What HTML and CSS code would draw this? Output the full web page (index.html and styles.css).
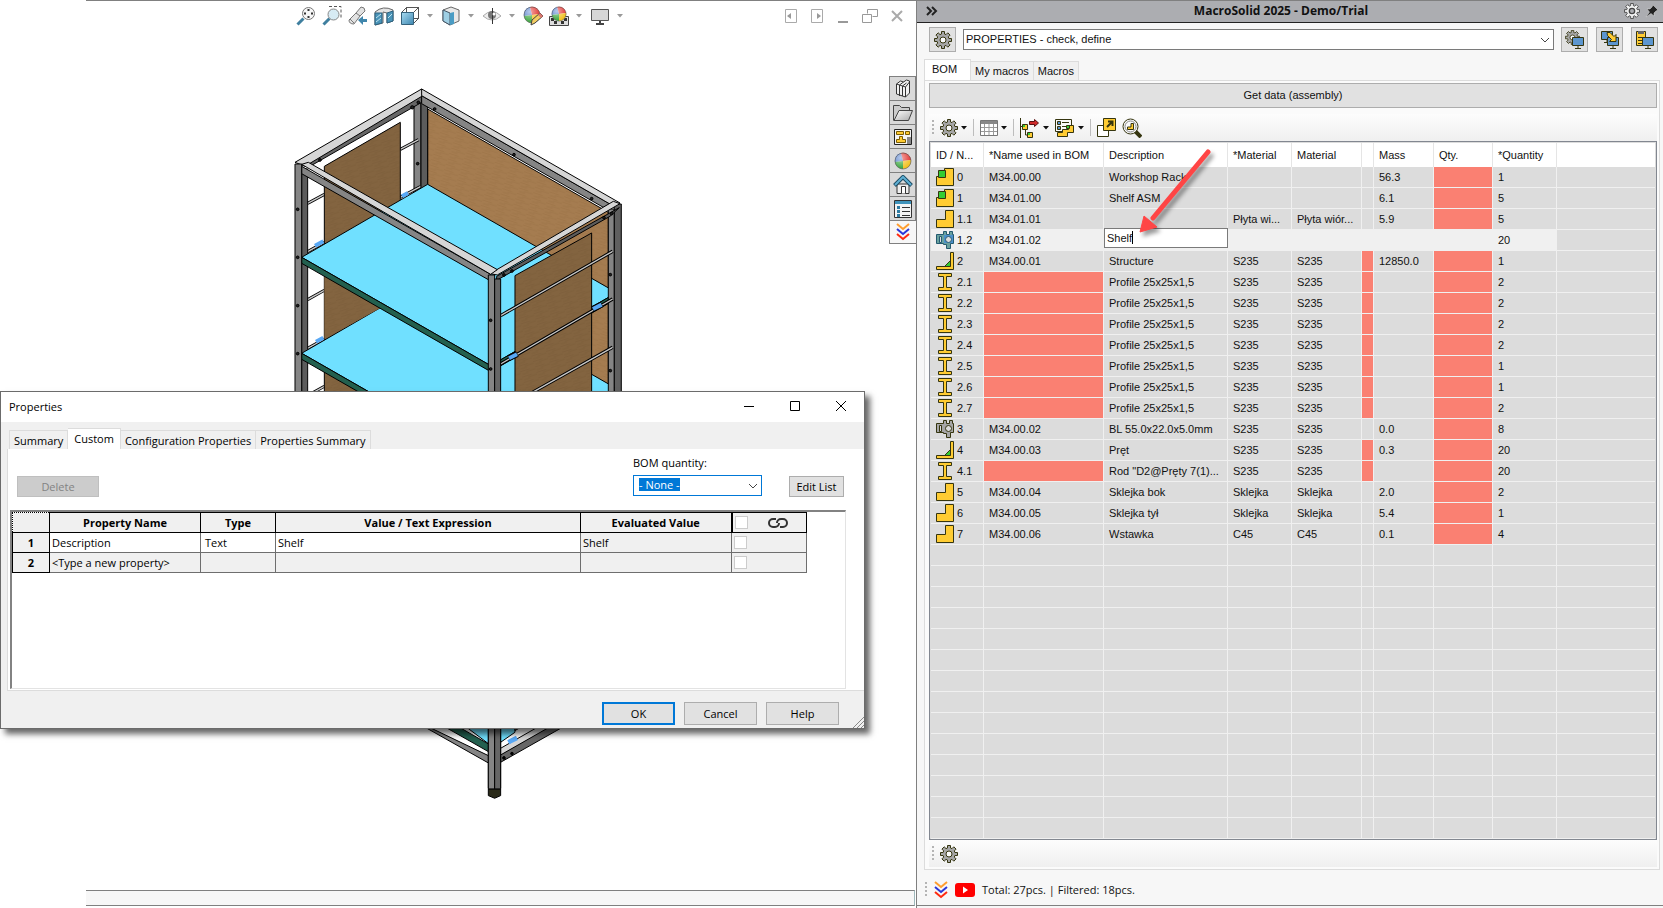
FILE: index.html
```html
<!DOCTYPE html>
<html lang="en">
<head>
    <meta charset="UTF-8">
    <meta name="viewport" content="width=device-width, initial-scale=1.0">
    <title>MacroSolid 2025 - Demo/Trial</title>
    <link rel="stylesheet" href="styles.css">
</head>
<body>

<!-- shared icons -->
<svg class="defs" width="0" height="0" aria-hidden="true">
    <defs>
        <radialGradient id="shine" cx="35%" cy="30%" r="70%">
            <stop offset="0" stop-color="#fff" stop-opacity=".6"/>
            <stop offset="1" stop-color="#fff" stop-opacity="0"/>
        </radialGradient>
        <linearGradient id="blueFace" x1="0" y1="0" x2="1" y2="1">
            <stop offset="0" stop-color="#a9dcf2"/>
            <stop offset="1" stop-color="#3d86b0"/>
        </linearGradient>
        <linearGradient id="paper" x1="0" y1="0" x2="1" y2="1">
            <stop offset="0" stop-color="#fff"/>
            <stop offset="1" stop-color="#aaa"/>
        </linearGradient>
        <pattern id="grain" width="46" height="17" patternUnits="userSpaceOnUse" patternTransform="rotate(18)">
            <rect width="46" height="17" fill="#a57c50"/>
            <path d="M0 4H30M18 9H46M4 14H24" stroke="#9a7145" stroke-width="1.5"/>
        </pattern>
        <pattern id="grainDark" width="46" height="17" patternUnits="userSpaceOnUse" patternTransform="rotate(-18)">
            <rect width="46" height="17" fill="#836440"/>
            <path d="M0 4H30M18 9H46M4 14H24" stroke="#795a37" stroke-width="1.5"/>
        </pattern>
    </defs>
    <symbol id="gear" viewBox="0 0 18 18">
        <path d="M7.500.5h3v2.500l1.500.6 1.800-1.800 2.300 2.300-1.800 1.800.6 1.600h2.600v3h-2.600l-.6 1.600 1.800 1.800-2.300 2.300-1.800-1.800-1.500.6v2.500h-3v-2.500l-1.500-.6-1.800 1.800-2.300-2.300 1.800-1.800-.6-1.600H.5v-3h2.600l.6-1.600-1.800-1.800 2.300-2.300 1.800 1.800 1.500-.6z" fill="#a6a6a6" stroke="#35350f"/>
        <circle cx="9" cy="9" r="3" fill="#fafafa" stroke="#35350f"/>
    </symbol>
    <symbol id="asm" viewBox="0 0 18 18">
        <path d="M8.500 .5h9v17h-17v-9h8z" fill="#fc3" stroke="#35350f"/>
        <path d="M2.500 2.500h7v7h-7z" fill="#3c3" stroke="#35350f"/>
    </symbol>
    <symbol id="part" viewBox="0 0 18 18">
        <path d="M9.500 .5h8v17h-17v-8h9z" fill="#fc3" stroke="#35350f"/>
    </symbol>
    <symbol id="beam" viewBox="0 0 18 18">
        <path d="M2.500 .5h13v3h-5v11h5v3h-13v-3h5v-11h-5z" fill="#fc3" stroke="#35350f"/>
    </symbol>
    <symbol id="weld" viewBox="0 0 18 18">
        <path d="M8.500 14.500l6-6v6z" fill="#3c3" stroke="#35350f"/>
        <path d="M14.500 .5h3v17h-17v-3h14z" fill="#fc3" stroke="#35350f"/>
    </symbol>
    <symbol id="bolt" viewBox="0 0 18 18">
        <path d="M.5 3.500h7v-3h3v3h3v-3h3v3h1v9h-3v5h-4v-4h-3v-1h-7z" fill="#a6a6a6" stroke="#35350f"/>
        <path d="M3.500 5.500h2v6h-2z" fill="#ddd" stroke="#35350f"/>
        <circle cx="12.500" cy="8.500" r="3" fill="#ddd" stroke="#35350f"/>
    </symbol>
    <symbol id="boltSel" viewBox="0 0 18 18">
        <path d="M.5 3.500h7v-3h3v3h3v-3h3v3h1v9h-3v5h-4v-4h-3v-1h-7z" fill="#69a29f" stroke="#245a70"/>
        <path d="M8 4h9v8H8z" fill="#4b90cc"/>
        <path d="M3.500 5.500h2v6h-2z" fill="#ddd" stroke="#245a70"/>
        <circle cx="12.500" cy="8.500" r="3" fill="#ddd" stroke="#245a70"/>
    </symbol>
    <symbol id="monitor" viewBox="0 0 12 12">
        <path d="M.5 .5h11v8H.5z" fill="#5c96cf" stroke="#35350f"/>
        <path d="M6 9v2.500M3 11.500h6" stroke="#35350f" fill="none"/>
    </symbol>
    <symbol id="chevrons" viewBox="0 0 14 18">
        <path d="M1 1l6 5 6-5" fill="none" stroke="#ff9d2e" stroke-width="2"/>
        <path d="M1 6l6 5 6-5" fill="none" stroke="#2a35d8" stroke-width="2"/>
        <path d="M1 11l6 5 6-5" fill="none" stroke="#ff2a10" stroke-width="2"/>
    </symbol>
    <symbol id="ball" viewBox="0 0 18 18">
        <path d="M9 9L7 1a8 8 0 0 0-6 9z" fill="#4b78c8"/>
        <path d="M9 9L7 1a8 8 0 0 1 10 7z" fill="#e0302c"/>
        <path d="M9 9L1 10a8 8 0 0 0 8 7z" fill="#37a43a"/>
        <path d="M9 9v8a8 8 0 0 0 8-9z" fill="#f2c01e"/>
        <circle cx="9" cy="9" r="8" fill="url(#shine)" stroke="#555" stroke-width=".6"/>
    </symbol>
    <symbol id="drop" viewBox="0 0 6 4">
        <path d="M0 0h6L3 3.500z" fill="currentColor"/>
    </symbol>
</svg>

<div class="app">
    <main class="workspace">
        <div class="view-bar">
            <div class="view-tools">
                <button aria-label="Zoom to fit"><svg width="20" height="20"><path d="M1.500 18.500l6-6" stroke="#3f7f9f" stroke-width="3"/><circle cx="12.500" cy="7.500" r="6" fill="#f6f6f6" stroke="#777"/><path d="M12.500 3v2M12.500 10v2M8 7.500h2M15 7.500h2" stroke="#333" stroke-width="2"/></svg></button>
                <button aria-label="Zoom to area"><svg width="20" height="20"><path d="M7 .5h12v11" fill="none" stroke="#555" stroke-dasharray="3 2"/><path d="M1.500 18.500l6-6" stroke="#3f7f9f" stroke-width="3"/><circle cx="11.500" cy="8.500" r="5.500" fill="#d7ebf4" stroke="#888"/></svg></button>
                <button aria-label="Previous view"><svg width="20" height="20"><path d="M1 14L8 7l5-6q4 0 4 4l-5 5-6 8q-5 0-5-4z" fill="#e2e2e2" stroke="#777"/><path d="M8 7l4 3M2 13l4 4" stroke="#777"/><path d="M10 14l5-4v3h4v3h-4v3z" fill="#3f86ac"/></svg></button>
                <button aria-label="Section view"><svg width="20" height="20"><path d="M1 6q8-7 18-2v11l-6 2V7l-4-1v11l-8 2z" fill="#e4e4e4" stroke="#666"/><path d="M1 7h7v10l-7 2zM13 7l6-2v10l-6 2z" fill="#4a94b8" stroke="#2c6280"/><path d="M2 12l5-4M2 16l5-4M14 12l4-4" stroke="#bfe3f0"/></svg></button>
                <button aria-label="View orientation"><svg width="20" height="20"><path d="M6.500 1.500h12v11h-12zM1 7l6-6M13 7l6-6M13 18l6-6" fill="none" stroke="#555"/><path d="M1.500 6.500h12v12h-12z" fill="url(#blueFace)" stroke="#35627c"/></svg></button>
                <svg class="drop" width="6" height="4"><use href="#drop"/></svg>
                <button aria-label="Display style"><svg width="20" height="20"><path d="M2 4l8-3 8 3v11l-9 4-7-4z" fill="#e8e8e8" stroke="#666"/><path d="M2 4l7 3v12l-7-4z" fill="#9fcfe4" stroke="#456"/><path d="M9 7l4-1v12l-4 1z" fill="#4a9cc4"/></svg></button>
                <svg class="drop" width="6" height="4"><use href="#drop"/></svg>
                <button aria-label="Hide/show items"><svg width="20" height="20"><path d="M1 10q9-9 18 0q-9 8-18 0z" fill="#eee" stroke="#aaa"/><circle cx="10" cy="9" r="4" fill="#777"/><path d="M10.500 2v16" stroke="#333"/><circle cx="12" cy="8" r="1.500" fill="#fff"/></svg></button>
                <svg class="drop" width="6" height="4"><use href="#drop"/></svg>
                <button aria-label="Edit appearance"><svg width="20" height="20"><use href="#ball" width="18" height="18"/><path d="M8 19l1-5 8-7 3 3-8 7z" fill="#f3cc62" stroke="#444"/><path d="M15 9l2-2 3 3-2 2z" fill="#db7770"/></svg></button>
                <button aria-label="Apply scene"><svg width="20" height="20"><path d="M.5 10.500h19v9H.5z" fill="#ddd" stroke="#444"/><path d="M2 12h3v3H2zM15 12h3v3h-3zM5 15h3v3H5zM12 15h3v3h-3z" fill="#333"/><use href="#ball" x="2" width="16" height="16"/></svg></button>
                <svg class="drop" width="6" height="4"><use href="#drop"/></svg>
                <button aria-label="View settings"><svg width="20" height="20"><path d="M1.500 3.500h17v11h-17z" fill="#d6d6d6" stroke="#555"/><path d="M10 15v3M6 18h8" stroke="#444" stroke-width="2"/></svg></button>
                <svg class="drop" width="6" height="4"><use href="#drop"/></svg>
            </div>
            <div class="doc-tools">
                <button aria-label="Collapse left"><svg width="14" height="14"><path d="M1.500 .5h11v13h-11z" fill="none" stroke="#aaa"/><path d="M7 4v6L3 7z" fill="#999"/></svg></button>
                <button aria-label="Collapse right"><svg width="14" height="14"><path d="M1.500 .5h11v13h-11z" fill="none" stroke="#aaa"/><path d="M7 4v6l4-3z" fill="#999"/></svg></button>
                <button aria-label="Minimize"><svg width="14" height="14"><path d="M2 13h10" stroke="#999" stroke-width="2"/></svg></button>
                <button aria-label="Restore"><svg width="16" height="14"><path d="M5.500 4.500v-4h10v7h-5M.5 5.500h9v8h-9z" fill="none" stroke="#999"/></svg></button>
                <button aria-label="Close document"><svg width="14" height="14"><path d="M2 2l10 10M12 2L2 12" stroke="#aaa" stroke-width="2"/></svg></button>
            </div>
        </div>

        <div class="scene-row">
            <svg class="scene" role="img" aria-label="Workshop rack model">
                <g transform="translate(280 39) scale(.3333)" stroke="#000" stroke-width="3" stroke-linejoin="round">
                    <!-- back panel and rear post -->
                    <path d="M443 90L985 400V1500H443z" fill="url(#grain)"/>
                    <path d="M402 60h21v290h-21z" fill="#858585"/>
                    <path d="M423 60h20v290h-20z" fill="#5c5c5c"/>
                    <!-- left side rods and panel -->
                    <g stroke-width="9"><path d="M361 211l55-29M83 373l50-27M83 518l50-28M361 355l60-32M83 662l50-28M83 808l50-28M83 950l50-28"/></g>
                    <g stroke-width="4" stroke="#ccc"><path d="M361 211l55-29M83 373l50-27M83 518l50-28M361 355l60-32M83 662l50-28M83 808l50-28M83 950l50-28"/></g>
                    <path d="M133 262L361 130V980H133z" fill="url(#grainDark)"/>
                    <path d="M65 270h18v700h-18z" fill="#5c5c5c"/>
                    <!-- lower shelf -->
                    <path d="M65 823L443 604L1010 929L632 1148z" fill="#70e0ff"/>
                    <path d="M65 823L632 1148V1166L65 841z" fill="#23604f"/>
                    <path d="M133 590L300 688L133 780z" fill="url(#grainDark)" stroke="none"/>
                    <!-- upper shelf -->
                    <path d="M65 535L443 316L1010 641L632 860z" fill="#70e0ff"/>
                    <path d="M65 535L632 860V878L65 553z" fill="#23604f"/>
                    <path d="M632 860L1010 641V659L632 878z" fill="#23604f"/>
                    <path d="M632 882L705 840V950H632z" fill="#70e0ff" stroke="none"/>
                    <path d="M105 500l25-13M366 352l18-10M108 788l22-12" stroke="#58a8f5" stroke-width="12"/>
                    <!-- right rear post -->
                    <path d="M985 390h18v560h-18z" fill="#858585"/>
                    <path d="M1003 375h21v575h-21z" fill="#606060"/>
                    <!-- top frame, back side -->
                    <path d="M90 240L425 50V70L90 262z" fill="#666"/>
                    <path d="M45 250L425 30L432 48L75 262z" fill="#d6d6d6"/>
                    <path d="M425 50L990 375L970 385L425 74z" fill="#858585"/>
                    <path d="M425 30L1020 372L995 378L425 50z" fill="#d6d6d6"/>
                    <!-- right side panel and rods -->
                    <path d="M705 590L935 462V950H705z" fill="url(#grainDark)"/>
                    <path d="M662 710L998 517M662 855L998 660M740 950L998 805" stroke-width="10"/>
                    <path d="M662 710L998 517M662 855L998 660M740 950L998 805" stroke="#c8c8c8" stroke-width="4"/>
                    <path d="M686 838l26-13M938 690l28-14" stroke="#000" stroke-width="18"/>
                    <path d="M687 838l24-12M939 690l26-13" stroke="#58a8f5" stroke-width="12"/>
                    <!-- top frame, front side -->
                    <path d="M650 592L1018 386L990 412L650 604z" fill="#5c5c5c"/>
                    <path d="M630 584L1000 367L1020 374L652 588z" fill="#d6d6d6"/>
                    <path d="M65 262L632 586V606L65 284z" fill="#858585"/>
                    <path d="M65 256L85 250L652 572L632 586z" fill="#d6d6d6"/>
                    <!-- left and front posts -->
                    <path d="M45 255h20v695h-20z" fill="#858585"/>
                    <path d="M625 588h19v1540h-19z" fill="#858585"/>
                    <path d="M644 600h18v1528h-18z" fill="#666"/>
                    <g fill="#222">
                        <circle cx="53" cy="391" r="4"/><circle cx="53" cy="535" r="4"/><circle cx="53" cy="680" r="4"/><circle cx="53" cy="824" r="4"/>
                        <circle cx="632" cy="724" r="4"/><circle cx="632" cy="870" r="4"/>
                        <circle cx="413" cy="254" r="4"/><circle cx="991" cy="587" r="4"/><circle cx="991" cy="875" r="4"/>
                        <circle cx="464" cy="90" r="4"/><circle cx="702" cy="227" r="4"/><circle cx="935" cy="359" r="4"/>
                        <circle cx="120" cy="243" r="4"/><circle cx="397" cy="85" r="5"/><circle cx="415" cy="70" r="4"/>
                        <circle cx="672" cy="588" r="4"/><circle cx="696" cy="576" r="4"/><circle cx="972" cy="416" r="4"/><circle cx="995" cy="404" r="4"/>
                    </g>
                    <!-- bottom corner -->
                    <path d="M460 1900L625 1995V2018L400 1890z" fill="#23604f"/>
                    <path d="M500 1900H625V1994z" fill="#70e0ff"/>
                    <path d="M400 1922L625 2030V2052L400 1925z" fill="#858585"/>
                    <path d="M662 1900H705V1960L662 1990z" fill="#70e0ff"/>
                    <path d="M705 1900H800L705 1955z" fill="#83643f"/>
                    <path d="M662 2008L830 1912V1935L662 2030z" fill="#d6d6d6"/>
                    <path d="M662 2028L860 1915V1938L662 2050z" fill="#666"/>
                    <path d="M685 1990l26-13" stroke="#58a8f5" stroke-width="14"/>
                    <circle cx="672" cy="2037" r="4"/><circle cx="696" cy="2024" r="4"/>
                    <path d="M625 2130h37v20l-18 8-19-8z" fill="#2b2b1a"/>
                    <path d="M625 1850h19v280h-19z" fill="#858585"/>
                    <path d="M644 1850h18v280h-18z" fill="#666"/>
                </g>
            </svg>

            <nav class="side-tabs">
                <button aria-label="Design library"><svg width="20" height="20"><path d="M3.500 5l4-3 3 1 3-2 3 1v12l-4 4-9-3z" fill="#f2f2f2" stroke="#333"/><path d="M3.500 5l3 1v11M6.500 6l4-3M9.500 17V7l4-3M9.500 7l-3-1M12.500 18V8l4-5M12.500 8l-3-1" fill="none" stroke="#333"/></svg></button>
                <button aria-label="File explorer"><svg width="20" height="20"><path d="M.5 17.500v-15h6l2 2h8v3" fill="#ccc" stroke="#444"/><path d="M1 17.500L6 7.500h13.500l-4 10z" fill="url(#paper)" stroke="#444"/></svg></button>
                <button aria-label="View palette"><svg width="20" height="20"><path d="M1.500 2.500h17v15h-17z" fill="#f4f4f4" stroke="#222"/><path d="M3.500 4.500h7v3h-7zM12.500 4.500h4v3h-4zM6.500 9.500h3v3h3v3h-9v-3h3z" fill="#fc3" stroke="#7a5b00"/><path d="M14 10h4v7h-4z" fill="#888"/></svg></button>
                <button aria-label="Appearances"><svg width="20" height="20"><use href="#ball" x="1" y="1" width="18" height="18"/></svg></button>
                <button aria-label="Home"><svg width="20" height="20"><path d="M4 9h12v9.500H4z" fill="#eee" stroke="#333"/><path d="M8.500 18.500v-7h4v7" fill="#fff" stroke="#333"/><path d="M1.500 10.500L10 2l8.500 8.500" fill="none" stroke="#1c4b63" stroke-width="4"/><path d="M2 10l8-8 8 8" fill="none" stroke="#5fb0d4" stroke-width="2"/></svg></button>
                <button aria-label="Custom properties"><svg width="20" height="20"><path d="M1.500 1.500h17v17h-17z" fill="#f4f4f4" stroke="#333"/><path d="M2 2h16v3H2z" fill="#3f93bb"/><path d="M4 7h3v3H4zM4 11h3v3H4zM4 15h3v3H4z" fill="#2d7ba3"/><path d="M9 8.500h8M9 12.500h8M9 16.500h8" stroke="#333"/></svg></button>
                <button class="active" aria-label="MacroSolid"><svg width="14" height="18"><use href="#chevrons"/></svg></button>
            </nav>
        </div>

        <div class="status-bar"></div>

        <section class="dialog">
            <header class="dialog-title">
                <h2>Properties</h2>
                <div class="window-buttons">
                    <button aria-label="Minimize"><svg width="12" height="12"><path d="M1 6.500h10" stroke="#000"/></svg></button>
                    <button aria-label="Maximize"><svg width="12" height="12"><path d="M1.500 1.500h9v9h-9z" fill="none" stroke="#000"/></svg></button>
                    <button aria-label="Close"><svg width="12" height="12"><path d="M1 1l10 10M11 1L1 11" stroke="#000"/></svg></button>
                </div>
            </header>
            <div class="dialog-tabs">
                <button>Summary</button>
                <button class="active">Custom</button>
                <button>Configuration Properties</button>
                <button>Properties Summary</button>
            </div>
            <div class="dialog-pane">
                <div class="dialog-tools">
                    <button class="btn delete" disabled>Delete</button>
                    <div class="bom-quantity">
                        <label for="bomQuantity">BOM quantity:</label>
                        <div class="combo">
                            <span class="combo-value">- None -</span>
                            <select id="bomQuantity"><option>- None -</option></select>
                            <svg width="10" height="6"><path d="M1 1l4 4 4-4" fill="none" stroke="#444"/></svg>
                        </div>
                    </div>
                    <button class="btn edit-list">Edit List</button>
                </div>
                <div class="prop-box">
                    <table class="props">
                        <colgroup><col class="p-no"><col class="p-name"><col class="p-type"><col class="p-value"><col class="p-eval"><col class="p-link"></colgroup>
                        <thead>
                            <tr>
                                <th class="corner"></th><th>Property Name</th><th>Type</th><th>Value / Text Expression</th><th>Evaluated Value</th>
                                <th class="link-head">
                                    <div class="link-cell">
                                        <input type="checkbox" aria-label="Link all">
                                        <svg width="20" height="12"><path d="M8 2H5a4 4 0 0 0 0 8h2a4 4 0 0 0 4-4M12 10h3a4 4 0 0 0 0-8h-2a4 4 0 0 0-4 4" fill="none" stroke="#333" stroke-width="2"/></svg>
                                    </div>
                                </th>
                            </tr>
                        </thead>
                        <tbody>
                            <tr><th>1</th><td class="white">Description</td><td class="white">Text</td><td class="white">Shelf</td><td>Shelf</td><td><div class="link-cell"><input type="checkbox" aria-label="Link property 1"></div></td></tr>
                            <tr><th>2</th><td>&lt;Type a new property&gt;</td><td></td><td></td><td></td><td><div class="link-cell"><input type="checkbox" aria-label="Link property 2"></div></td></tr>
                        </tbody>
                    </table>
                </div>
            </div>
            <footer class="dialog-actions">
                <button class="btn ok">OK</button>
                <button class="btn">Cancel</button>
                <button class="btn">Help</button>
            </footer>
            <svg class="grip" width="12" height="12"><path d="M1 12L12 1M5 12l7-7M9 12l3-3" stroke="#888"/></svg>
        </section>
    </main>

    <aside class="panel">
        <header class="panel-title">
            <button aria-label="Collapse panel"><svg width="12" height="10"><path d="M1 1l4 4-4 4M6 1l4 4-4 4" fill="none" stroke="#222" stroke-width="2"/></svg></button>
            <h1>MacroSolid 2025 - Demo/Trial</h1>
            <div class="title-tools">
                <button aria-label="Settings"><svg width="16" height="16" viewBox="0 0 18 18"><path d="M7.500.5h3v2.500l1.500.6 1.800-1.800 2.300 2.300-1.800 1.800.6 1.600h2.600v3h-2.600l-.6 1.600 1.800 1.800-2.300 2.300-1.800-1.800-1.500.6v2.500h-3v-2.500l-1.500-.6-1.800 1.800-2.300-2.300 1.800-1.800-.6-1.600H.5v-3h2.600l.6-1.600-1.800-1.800 2.300-2.300 1.800 1.800 1.500-.6z" fill="#f2f2f2" stroke="#444"/><circle cx="9" cy="9" r="3" fill="#acadb1" stroke="#444" stroke-width="1.500"/></svg></button>
                <button aria-label="Pin"><svg width="14" height="14"><path d="M8 1l5 5-2 1-2 2v3l-3-2.500L1 13l3.500-5L2 5h3l2-2z" fill="#222" stroke="#ddd" stroke-width=".5"/></svg></button>
            </div>
        </header>

        <div class="macro-bar">
            <button class="tool" aria-label="Macro settings"><svg width="18" height="18"><use href="#gear"/></svg></button>
            <div class="macro-select">
                <select aria-label="Macro"><option>PROPERTIES - check, define</option></select>
                <svg width="10" height="6"><path d="M1 1l4 4 4-4" fill="none" stroke="#444"/></svg>
            </div>
            <div class="macro-buttons">
                <button class="tool" aria-label="Run on screen"><svg width="20" height="20"><use href="#gear" width="15" height="15"/><use href="#monitor" x="7" y="7" width="12" height="12"/></svg></button>
                <button class="tool" aria-label="Copy between screens"><svg width="20" height="20"><use href="#monitor" x="1" y="1" width="12" height="12"/><use href="#monitor" x="7" y="7" width="12" height="12"/><path d="M7 2.500h3l4 4 2-2v7H9.500l2-2-4-4z" fill="#fc3" stroke="#35350f"/></svg></button>
                <button class="tool" aria-label="Paste to screen"><svg width="20" height="20"><path d="M1.500 1.500h9v14h-9z" fill="#fc3" stroke="#35350f"/><path d="M3 1h6v3H3z" fill="#666"/><path d="M3 7.500h6M3 10.500h6M3 13.500h6" stroke="#35350f"/><use href="#monitor" x="7" y="7" width="12" height="12"/></svg></button>
            </div>
        </div>

        <div class="tabs">
            <button class="active">BOM</button>
            <button>My macros</button>
            <button>Macros</button>
        </div>

        <div class="pane">
            <button class="get-data">Get data (assembly)</button>
            <div class="strip">
                <span class="handle"></span>
                <button aria-label="Options"><svg width="18" height="18"><use href="#gear"/></svg><svg width="6" height="4"><use href="#drop"/></svg></button>
                <span class="sep"></span>
                <button aria-label="Columns"><svg width="18" height="18"><path d="M.5 1.500h17v15H.5z" fill="#fff" stroke="#777"/><path d="M1 2h16v3H1z" fill="#888"/><path d="M1 8.500h16M1 12.500h16M4.500 5v11M9 5v11M13.500 5v11" stroke="#999"/></svg><svg width="6" height="4"><use href="#drop"/></svg></button>
                <span class="sep"></span>
                <button aria-label="Structure"><svg width="20" height="20"><path d="M.5 0v20M.5 8.500h3M5.500 11v6h3" stroke="#35350f" fill="none"/><path d="M2.500 6.500h5v5h-5zM7.500 14.500h5v5h-5z" fill="#fc3" stroke="#35350f"/><path d="M3 7h2v2H3zM8 15h2v2H8z" fill="#3c3"/><path d="M9.500 3.500h5v-2l4 3.500-4 3.500v-2h-5z" fill="#d22b2b" stroke="#5a1010"/></svg><svg width="6" height="4"><use href="#drop"/></svg></button>
                <button aria-label="Lists"><svg width="20" height="20"><path d="M.5 1.500h16v12H.5z" fill="#fafafa" stroke="#35350f"/><path d="M2.500 3.500h3v3h-3zM2.500 8.500h3v3h-3z" fill="#5c96cf" stroke="#35350f"/><path d="M7 4.500h7M7 8.500h4" stroke="#35350f"/><path d="M13.500 7.500h5v7h-6v4h-10v-4h5v-3h6z" fill="#fc3" stroke="#35350f"/><path d="M11.500 7.500h3v3h-3z" fill="#3c3" stroke="#35350f"/></svg><svg width="6" height="4"><use href="#drop"/></svg></button>
                <span class="sep"></span>
                <button aria-label="Open component"><svg width="19" height="19"><path d="M.5 7.500h11v11H.5z" fill="#fff" stroke="#35350f"/><path d="M6.500 .5h12v12h-12z" fill="#fc3" stroke="#35350f"/><path d="M10 9l5-5M11 3.500h4.500V8" fill="none" stroke="#35350f" stroke-width="2"/></svg></button>
                <button aria-label="Find"><svg width="20" height="20"><path d="M13 13l6 6" stroke="#35350f" stroke-width="4"/><circle cx="8.500" cy="8.500" r="7.500" fill="#fafafa" stroke="#35350f"/><circle cx="8.500" cy="8.500" r="5.500" fill="none" stroke="#888"/><path d="M9 5.500h2.500v6h-6V9H9z" fill="#fc3" stroke="#35350f"/></svg></button>
            </div>

            <div class="grid-box">
                <table class="bom">
                    <colgroup><col class="c-id"><col class="c-name"><col class="c-desc"><col class="c-mat1"><col class="c-mat2"><col class="c-flag"><col class="c-mass"><col class="c-qty"><col class="c-quantity"><col></colgroup>
                    <thead>
                        <tr><th>ID / N...</th><th>*Name used in BOM</th><th>Description</th><th>*Material</th><th>Material</th><th></th><th>Mass</th><th>Qty.</th><th>*Quantity</th><th></th></tr>
                    </thead>
                    <tbody id="bomBody"></tbody>
                </table>
            </div>

            <div class="strip bottom">
                <span class="handle"></span>
                <button aria-label="Filter settings"><svg width="18" height="18"><use href="#gear"/></svg></button>
            </div>
        </div>

        <footer class="totals">
            <span class="handle"></span>
            <svg width="14" height="18"><use href="#chevrons"/></svg>
            <svg width="20" height="14"><rect width="20" height="14" rx="3" fill="#f00"/><path d="M8 3.500l5 3.500-5 3.500z" fill="#fff"/></svg>
            <span>Total: 27pcs. | Filtered: 18pcs.</span>
        </footer>

        <svg class="arrow" width="80" height="100">
            <path d="M72 4L17 70" stroke="#ff4545" stroke-width="5" stroke-linecap="round"/>
            <path d="M4 84L8 68L21 79z" fill="#ff4545" stroke="#ff4545"/>
        </svg>
    </aside>
</div>

<script>
    // icon, id, name, description, *material, material, flag, mass, *quantity
    const rows = [
        ["asm", "0", "M34.00.00", "Workshop Rack", "", "", 0, "56.3", 1],
        ["asm", "1", "M34.01.00", "Shelf ASM", "", "", 0, "6.1", 5],
        ["part", "1.1", "M34.01.01", "", "Płyta wi...", "Płyta wiór...", 0, "5.9", 5],
        ["boltSel", "1.2", "M34.01.02", "Shelf", "", "", 0, "", 20],
        ["weld", "2", "M34.00.01", "Structure", "S235", "S235", 1, "12850.0", 1],
        ["beam", "2.1", "", "Profile 25x25x1,5", "S235", "S235", 1, "", 2],
        ["beam", "2.2", "", "Profile 25x25x1,5", "S235", "S235", 1, "", 2],
        ["beam", "2.3", "", "Profile 25x25x1,5", "S235", "S235", 1, "", 2],
        ["beam", "2.4", "", "Profile 25x25x1,5", "S235", "S235", 1, "", 2],
        ["beam", "2.5", "", "Profile 25x25x1,5", "S235", "S235", 1, "", 1],
        ["beam", "2.6", "", "Profile 25x25x1,5", "S235", "S235", 1, "", 1],
        ["beam", "2.7", "", "Profile 25x25x1,5", "S235", "S235", 1, "", 2],
        ["bolt", "3", "M34.00.02", "BL 55.0x22.0x5.0mm", "S235", "S235", 0, "0.0", 8],
        ["weld", "4", "M34.00.03", "Pręt", "S235", "S235", 1, "0.3", 20],
        ["beam", "4.1", "", "Rod \"D2@Pręty 7(1)...", "S235", "S235", 1, "", 20],
        ["part", "5", "M34.00.04", "Sklejka bok", "Sklejka", "Sklejka", 0, "2.0", 2],
        ["part", "6", "M34.00.05", "Sklejka tył", "Sklejka", "Sklejka", 0, "5.4", 1],
        ["part", "7", "M34.00.06", "Wstawka", "C45", "C45", 0, "0.1", 4]
    ];
    const EDITED = 3;
    const EMPTY_ROWS = 14;

    const body = document.getElementById("bomBody");

    rows.forEach(([icon, id, name, desc, mat1, mat2, flag, mass, quantity], index) => {
        const row = body.insertRow();
        const edited = index === EDITED;
        if (edited) row.className = "selected";
        row.innerHTML = `
            <td><span class="item"><svg width="18" height="18"><use href="#${icon}"/></svg>${id}</span></td>
            <td class="${name ? "" : "missing"}">${name}</td>
            <td>${edited ? `<span class="editor"><input type="text" value="${desc}" aria-label="Description"><i class="caret"></i></span>` : desc}</td>
            <td>${mat1}</td>
            <td>${mat2}</td>
            <td class="${flag ? "missing" : ""}"></td>
            <td>${mass}</td>
            <td class="${edited ? "" : "missing"}"></td>
            <td>${quantity}</td>
            <td class="rest"></td>
        `;
    });

    for (let i = 0; i < EMPTY_ROWS; i++) {
        body.insertRow().innerHTML = "<td></td>".repeat(9) + "<td class='rest'></td>";
    }
</script>

</body>
</html>
```

FILE: styles.css
```css
* {
    box-sizing: border-box;
}
body {
    margin: 0;
    font-family: "Liberation Sans", Arial, sans-serif;
    font-size: 11px;
    color: #111;
    background: #fff;
}
button, select, input {
    font: inherit;
    color: inherit;
    margin: 0;
}
button {
    padding: 0;
    border: none;
    background: none;
}
svg { display: block; flex-shrink: 0; }
.defs { position: absolute; }
h1, h2 { margin: 0; }

.app {
    display: flex;
    height: 100vh;
    overflow: hidden;
}

/* ---- modelling area ---- */
.workspace {
    position: relative;
    flex: 1;
    min-width: 0;
    display: flex;
    flex-direction: column;
}
.view-bar {
    display: flex;
    justify-content: space-between;
    height: 40px;
    margin-left: 86px;
    padding: 5px 12px 0 210px;
    border-top: 1px solid #808080;
}
.view-tools, .doc-tools {
    display: flex;
    align-items: center;
    height: 20px;
}
.view-tools { gap: 6px; }
.view-tools .drop {
    color: #999;
    margin: 0 2px 0 1px;
}
.doc-tools { gap: 12px; }
.scene-row {
    flex: 1;
    display: flex;
    min-height: 0;
}
.scene {
    flex: 1;
    min-width: 0;
    height: 100%;
}
.side-tabs {
    width: 27px;
    margin-top: 36px;
    display: flex;
    flex-direction: column;
}
.side-tabs button {
    display: flex;
    align-items: center;
    justify-content: center;
    height: 24px;
    background: #d9d9d9;
    border: 1px solid #808080;
    border-bottom: none;
}
.side-tabs .active {
    background: #f7f7f7;
    border-right: none;
    border-bottom: 1px solid #808080;
}
.status-bar {
    height: 16px;
    margin: 0 1px 2px 86px;
    background: #f7f7f7;
    border: 1px solid #808080;
    border-left: none;
    border-right-color: #9fb8bb;
}

/* ---- properties dialog ---- */
.dialog {
    position: absolute;
    left: 0;
    top: 391px;
    width: 865px;
    display: flex;
    flex-direction: column;
    background: #f0f0f0;
    border: 1px solid #6b6b6b;
    box-shadow: 5px 5px 6px rgba(0, 0, 0, 0.6);
    font-family: "Open Sans", "Segoe UI", sans-serif;
    color: #000;
}
.dialog-title {
    display: flex;
    align-items: center;
    justify-content: space-between;
    height: 30px;
    padding: 0 17px 2px 8px;
    background: #fff;
}
.dialog-title h2 {
    font-size: 11px;
    font-weight: normal;
}
.window-buttons {
    display: flex;
    gap: 34px;
}
.dialog-tabs {
    display: flex;
    align-items: flex-end;
    height: 27px;
    padding-left: 8px;
}
.dialog-tabs button {
    height: 19px;
    padding: 0 4px;
    border: 1px solid #dcdcdc;
    border-left: none;
    border-bottom: none;
}
.dialog-tabs button:first-child { border-left: 1px solid #dcdcdc; }
.dialog-tabs .active {
    height: 21px;
    padding: 0 6px 2px;
    background: #fff;
}
.dialog-pane {
    height: 242px;
    margin-left: 6px;
    padding-left: 2px;
    background: #fff;
    border: 1px solid #dcdcdc;
    border-top: none;
    border-right: none;
}
.dialog-tools {
    display: flex;
    align-items: flex-end;
    height: 48px;
    padding: 0 20px 0 7px;
}
.btn {
    height: 21px;
    background: #e1e1e1;
    border: 1px solid #adadad;
}
.delete {
    width: 82px;
    background: #ccc;
    border-color: #bfbfbf;
    color: #838383;
}
.bom-quantity {
    margin: 0 27px 1px auto;
}
.bom-quantity label {
    display: block;
    height: 20px;
    line-height: 16px;
}
.combo {
    position: relative;
    display: flex;
    align-items: center;
    width: 129px;
    height: 21px;
    border: 1px solid #0078d7;
    background: #fff;
}
.combo select {
    position: absolute;
    inset: 0;
    width: 100%;
    opacity: 0;
}
.combo-value {
    height: 13px;
    margin: 0 auto 2px 5px;
    line-height: 13px;
    background: #0078d7;
    color: #fff;
}
.combo svg { margin-right: 3px; }
.edit-list { width: 55px; }
.prop-box {
    width: 836px;
    height: 179px;
    margin-top: 13px;
    border: 1px solid #e3e3e3;
    border-top: 2px solid #828282;
    border-left: 2px solid #828282;
}
.props {
    width: 794px;
    table-layout: fixed;
    border-collapse: collapse;
}
.p-no { width: 37px; }
.p-name { width: 151px; }
.p-type { width: 75px; }
.p-value { width: 305px; }
.p-eval { width: 151px; }
.p-link { width: 75px; }
.props th, .props td {
    height: 20px;
    padding: 0 2px;
    line-height: 15px;
    background: #f0f0f0;
    border: 1px solid #6e6e6e;
}
.props th {
    border-color: #000;
    text-align: center;
}
.props th.corner { border: 1px dotted #000; }
.props th.link-head { border-left: 2px solid #000; }
.props td.white { background: #fff; }
.props td:nth-child(3) { padding-left: 4px; }
.link-cell {
    display: flex;
    align-items: center;
    gap: 20px;
}
.link-cell input {
    appearance: none;
    width: 13px;
    height: 13px;
    background: #fff;
    border: 1px solid #ccc;
}
.dialog-actions {
    display: flex;
    justify-content: flex-end;
    gap: 9px;
    padding: 11px 25px 3px 0;
}
.dialog-actions .btn {
    width: 73px;
    height: 23px;
}
.dialog-actions .ok { border: 2px solid #0078d7; }
.grip {
    position: absolute;
    right: 0;
    bottom: 0;
}

/* ---- MacroSolid panel ---- */
.panel {
    position: relative;
    flex: 0 0 747px;
    display: flex;
    flex-direction: column;
    background: #f7f7f7;
    border-left: 1px solid #808080;
    border-top: 1px solid #808080;
}
.panel-title {
    display: flex;
    align-items: center;
    justify-content: space-between;
    height: 22px;
    padding: 0 4px 2px 9px;
    background: #acadb1;
    border-bottom: 1px solid #222;
}
.panel-title h1 {
    font: bold 12px "Open Sans", "Segoe UI", sans-serif;
}
.title-tools {
    display: flex;
    align-items: center;
    gap: 5px;
}
.macro-bar {
    display: flex;
    align-items: center;
    gap: 7px;
    padding: 4px 5px 0 12px;
}
.macro-select {
    position: relative;
    flex: 1;
}
.macro-select select {
    display: block;
    width: 100%;
    height: 21px;
    padding: 0 2px 1px;
    appearance: none;
    background: #fff;
    border: 1px solid #7a7a7a;
    border-radius: 0;
}
.macro-select svg {
    position: absolute;
    right: 4px;
    top: 8px;
    pointer-events: none;
}
.macro-buttons {
    display: flex;
    gap: 8px;
}
.tool {
    display: flex;
    align-items: center;
    justify-content: center;
    width: 27px;
    height: 25px;
    background: #e1e1e1;
    border: 1px solid #adadad;
}
.tabs {
    display: flex;
    align-items: flex-end;
    height: 28px;
    padding-left: 7px;
}
.tabs button {
    height: 19px;
    padding: 0 4px;
    background: #f0f0f0;
    border: 1px solid #dcdcdc;
    border-left: none;
    border-bottom: none;
}
.tabs .active {
    height: 21px;
    padding: 0 13px 2px 7px;
    background: #fff;
    border-left: 1px solid #dcdcdc;
}
.pane {
    flex: 1;
    min-height: 0;
    display: flex;
    flex-direction: column;
    margin: 0 3px 0 7px;
    padding: 2px 2px 2px 4px;
    background: #fbfbfb;
    border: 1px solid #dcdcdc;
}
.get-data {
    height: 25px;
    padding-bottom: 2px;
    background: #e1e1e1;
    border: 1px solid #adadad;
}
.strip {
    display: flex;
    align-items: center;
    gap: 6px;
    height: 27px;
    margin-top: 6px;
    padding-left: 3px;
    background: linear-gradient(#fdfdfd, #efefef);
}
.strip.bottom { margin-top: 0; }
.strip button {
    display: flex;
    align-items: center;
    gap: 3px;
}
.handle {
    width: 2px;
    height: 15px;
    background: repeating-linear-gradient(#b4b4b4 0 2px, transparent 2px 4px);
}
.sep {
    width: 1px;
    height: 17px;
    background: #bdbdbd;
}
.grid-box {
    flex: 1;
    min-height: 0;
    padding: 1px;
    overflow: hidden;
    background: #dcdcdc;
    border: 1px solid #828790;
}
.bom {
    width: 100%;
    table-layout: fixed;
    border-collapse: separate;
    border-spacing: 0;
}
.c-id { width: 53px; }
.c-name { width: 120px; }
.c-desc { width: 124px; }
.c-mat1 { width: 64px; }
.c-mat2 { width: 70px; }
.c-flag { width: 12px; }
.c-mass { width: 60px; }
.c-qty { width: 59px; }
.c-quantity { width: 64px; }
.bom th {
    height: 24px;
    padding: 0 0 0 5px;
    text-align: left;
    font-weight: normal;
    background: #fff;
    border-right: 1px solid #e5e5e5;
    white-space: nowrap;
}
.bom td {
    height: 21px;
    padding: 0 0 0 5px;
    background: #dcdcdc;
    border-right: 1px solid #f0f0f0;
    border-bottom: 1px solid #f0f0f0;
    white-space: nowrap;
}
.bom td.rest, .bom th:last-child { border-right: none; }
.bom td.missing { background: #fa8072; }
.bom .selected td:not(.rest) { background: #f0f0f0; }
.item {
    display: flex;
    align-items: center;
    gap: 3px;
}
.editor {
    position: relative;
    display: block;
    width: 124px;
    height: 20px;
    margin: -4px 0 0 -5px;
}
.editor input {
    width: 100%;
    height: 100%;
    padding: 0 2px;
    background: #fff;
    border: 1px solid #7a7a7a;
}
.caret {
    position: absolute;
    left: 28px;
    top: 3px;
    width: 1px;
    height: 13px;
    background: #000;
}
.totals {
    display: flex;
    align-items: center;
    gap: 7px;
    height: 32px;
    margin: 4px 0 2px;
    padding-left: 8px;
    border-bottom: 1px solid #808080;
    font-family: "Open Sans", "Segoe UI", sans-serif;
}
.arrow {
    position: absolute;
    left: 219px;
    top: 147px;
    filter: drop-shadow(3px 4px 2px rgba(0, 0, 0, 0.4));
}
```
